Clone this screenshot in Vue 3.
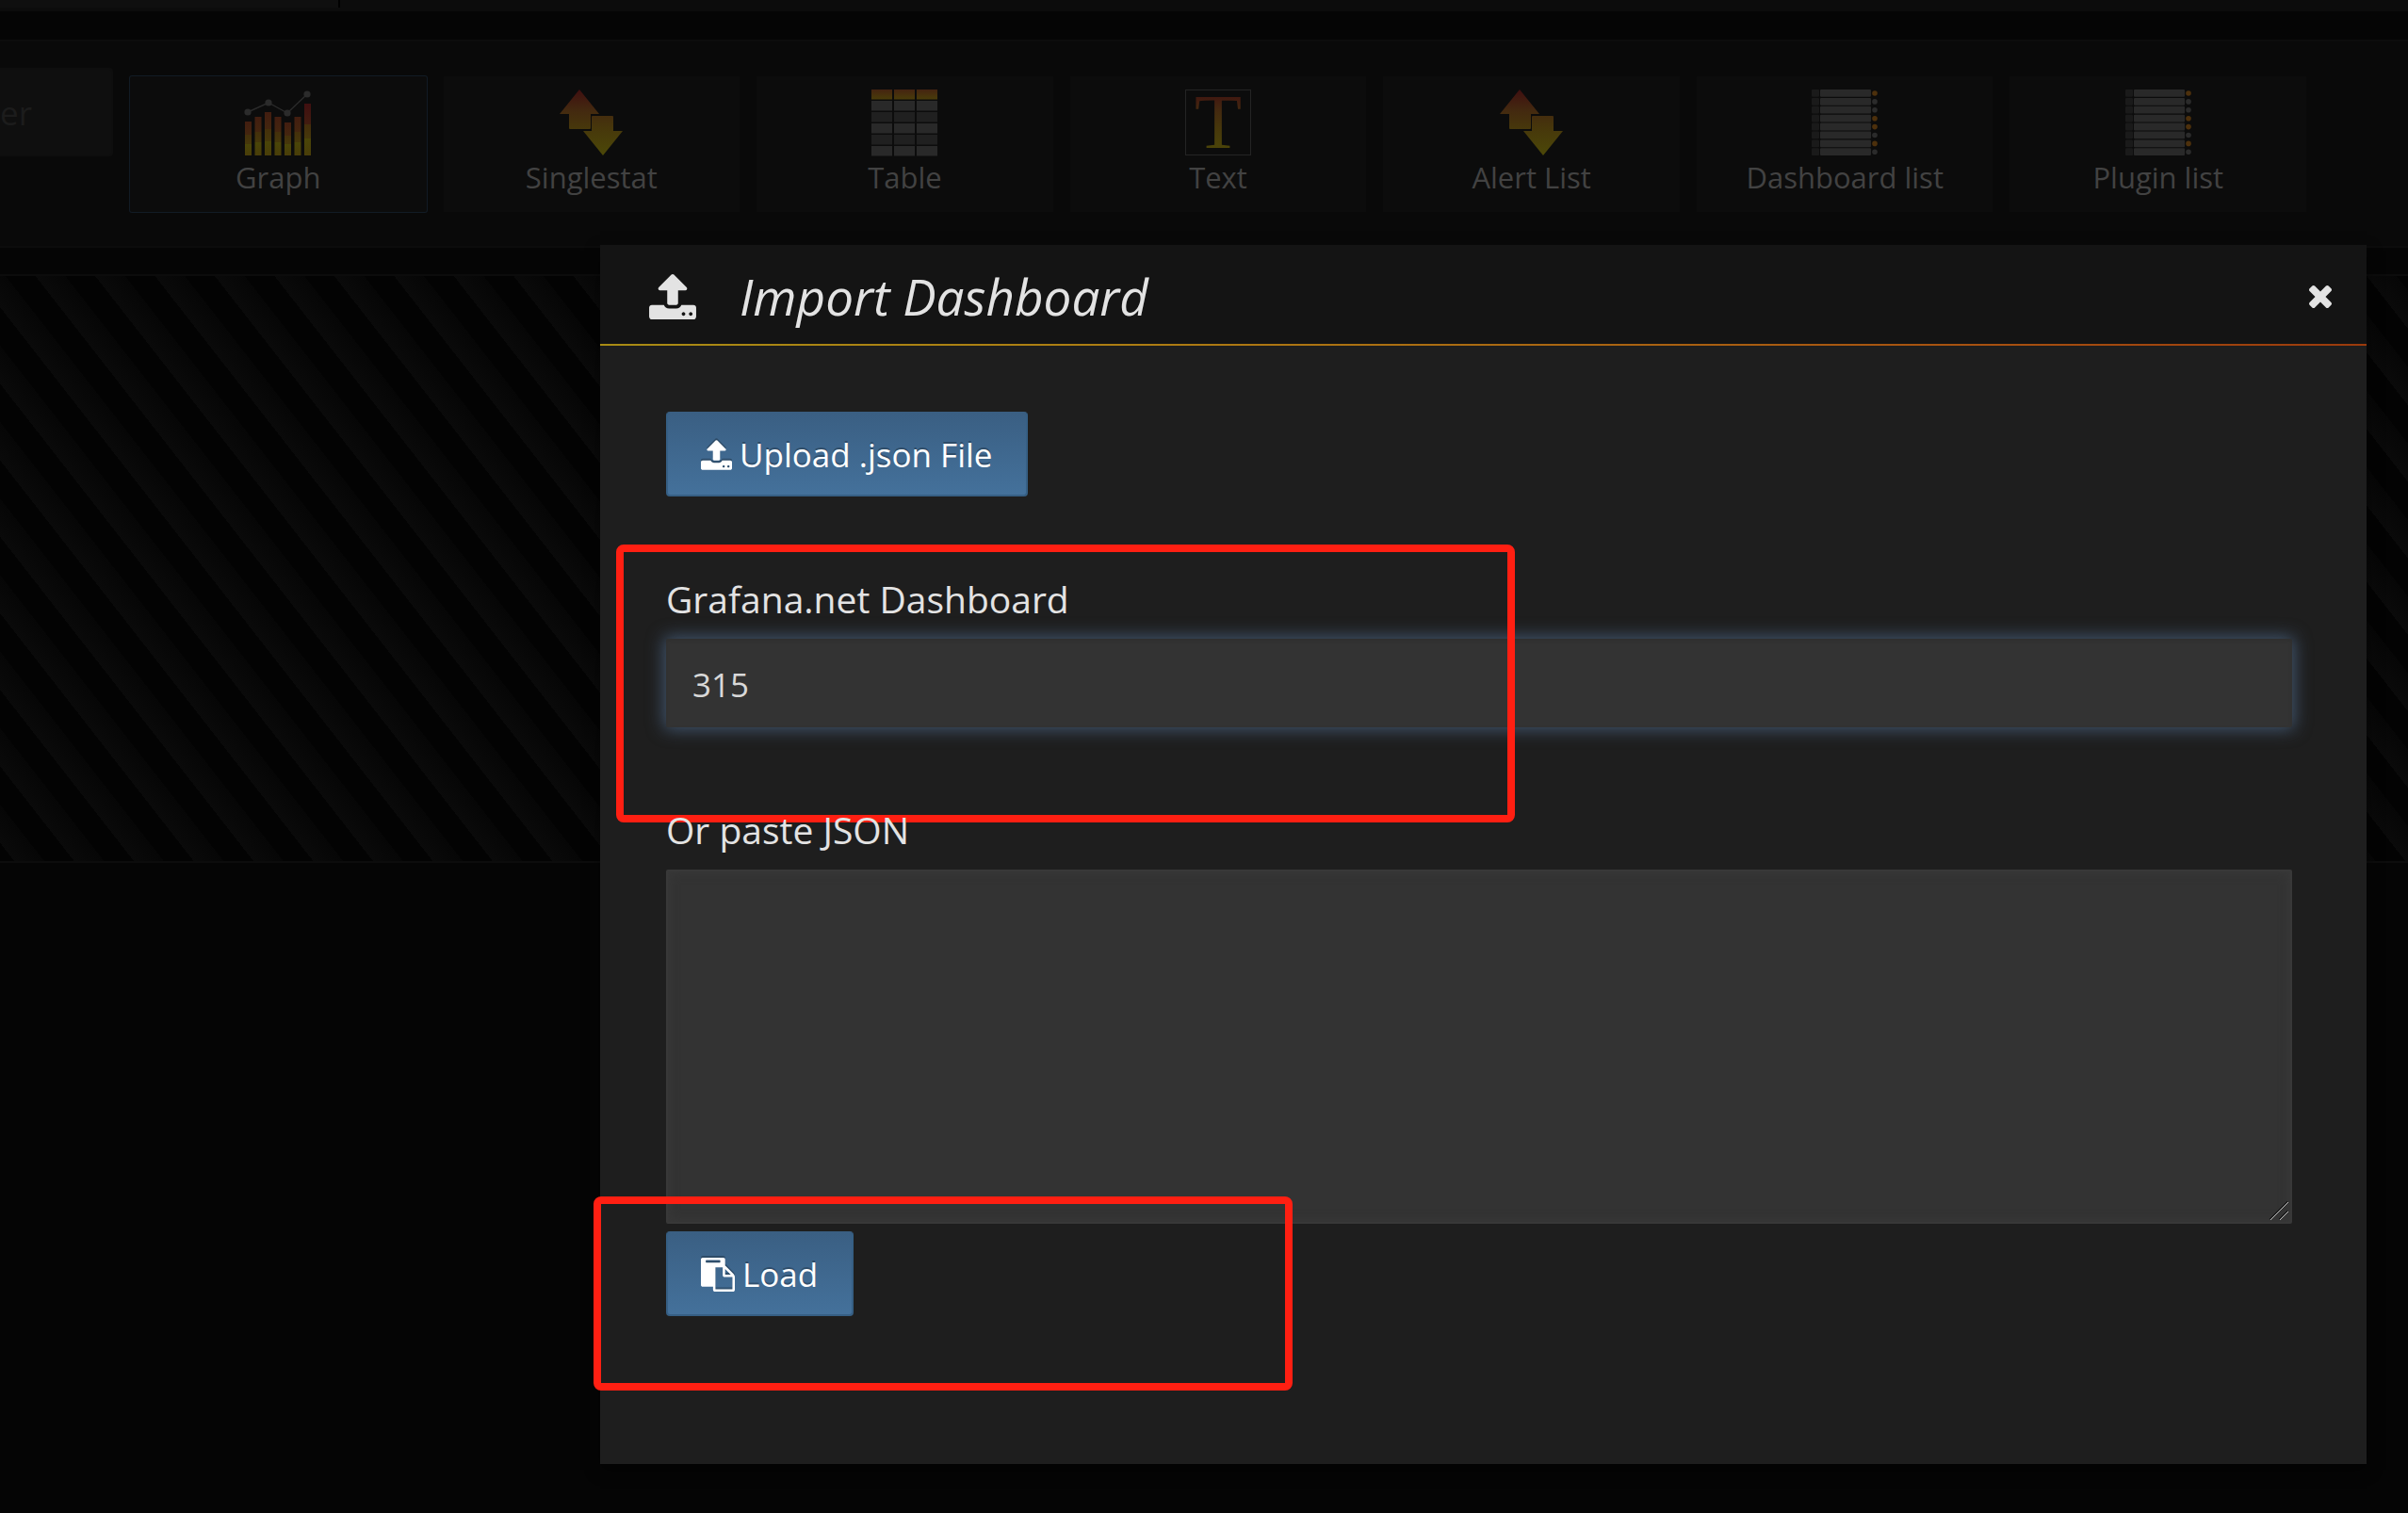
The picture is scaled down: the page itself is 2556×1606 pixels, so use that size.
<script setup>
import { ref } from 'vue'

const panels = [
  { name: 'Graph', icon: 'graph', selected: true },
  { name: 'Singlestat', icon: 'arrows' },
  { name: 'Table', icon: 'table' },
  { name: 'Text', icon: 'text' },
  { name: 'Alert List', icon: 'arrows' },
  { name: 'Dashboard list', icon: 'list' },
  { name: 'Plugin list', icon: 'list' },
]

const barTops = [34, 29, 24, 29, 35, 29, 15]
const points = [[3, 24], [25, 14], [45, 25], [66, 5]]
const listRows = [true, false, false, true, true, false, true, false]

const filter = ref('')
const dashboardId = ref('315')
const json = ref('')
</script>

<template>
  <div class="page">
    <svg class="defs" aria-hidden="true">
      <defs>
        <linearGradient id="bar" x1="0" y1="0" x2="0" y2="1">
          <stop offset="0" stop-color="#421d10" />
          <stop offset="0.4" stop-color="#44260f" />
          <stop offset="0.4" stop-color="#44300b" />
          <stop offset="0.67" stop-color="#46380b" />
          <stop offset="0.67" stop-color="#4a4508" />
          <stop offset="1" stop-color="#493d09" />
        </linearGradient>
        <linearGradient id="bar-high" x1="0" y1="0" x2="0" y2="1">
          <stop offset="0" stop-color="#400f10" />
          <stop offset="0.4" stop-color="#421d10" />
          <stop offset="0.4" stop-color="#442d0b" />
          <stop offset="0.67" stop-color="#46380b" />
          <stop offset="0.67" stop-color="#4a4508" />
          <stop offset="1" stop-color="#493d09" />
        </linearGradient>
        <linearGradient id="heat" gradientUnits="userSpaceOnUse" x1="0" y1="0" x2="0" y2="70">
          <stop offset="0" stop-color="#400f10" />
          <stop offset="0.3" stop-color="#432810" />
          <stop offset="0.6" stop-color="#47380b" />
          <stop offset="1" stop-color="#4c4808" />
        </linearGradient>
        <linearGradient id="head" x1="0" y1="0" x2="0" y2="1">
          <stop offset="0" stop-color="#452411" />
          <stop offset="1" stop-color="#493c0a" />
        </linearGradient>
      </defs>
    </svg>

    <div class="topbar"><div class="topbar-active"></div></div>

    <section class="picker" aria-label="Panel types">
      <input v-model="filter" class="filter" type="text" placeholder="er" aria-label="Panel filter" />
      <div class="cards">
        <button
          v-for="panel in panels"
          :key="panel.name"
          type="button"
          class="card"
          :class="{ selected: panel.selected }"
        >
          <svg class="card-icon" viewBox="0 0 70 70" aria-hidden="true">
            <template v-if="panel.icon === 'graph'">
              <rect
                v-for="(top, i) in barTops"
                :key="i"
                :x="i * 10.5"
                :y="top"
                width="7"
                :height="70 - top"
                :fill="top < 20 ? 'url(#bar-high)' : 'url(#bar)'"
              />
              <polyline :points="points.join(' ')" fill="none" stroke="#2b2b2b" stroke-width="1.4" />
              <circle v-for="p in points" :key="p[0]" :cx="p[0]" :cy="p[1]" r="3.6" fill="#2b2b2b" />
            </template>
            <g v-else-if="panel.icon === 'arrows'" fill="url(#heat)">
              <path d="M22 0L43 26H34V41Q34 42 33 42H12Q11 42 11 41V26H1Z" />
              <path d="M36 28H57Q58 28 58 29V44H68L47 70L26 44H35V29Q35 28 36 28Z" />
            </g>
            <template v-else-if="panel.icon === 'table'">
              <template v-for="r in 6" :key="r">
                <rect
                  v-for="c in 3"
                  :key="c"
                  :x="(c - 1) * 24"
                  :y="(r - 1) * 12"
                  width="22"
                  height="10.5"
                  :fill="r === 1 ? 'url(#head)' : r % 2 ? '#202020' : '#292929'"
                />
              </template>
            </template>
            <template v-else-if="panel.icon === 'text'">
              <rect x="0.5" y="0.5" width="69" height="69" fill="none" stroke="#242424" />
              <text x="35" y="62" class="glyph" text-anchor="middle" fill="url(#heat)">T</text>
            </template>
            <template v-else>
              <template v-for="(hot, i) in listRows" :key="i">
                <rect x="0" :y="i * 8.9" width="8" height="7.8" rx="1" fill="#1a1a1a" />
                <rect x="9" :y="i * 8.9" width="54" height="7.8" rx="1" fill="#292929" />
                <circle cx="67" :cy="i * 8.9 + 4" r="2.8" :fill="hot ? '#4d300c' : '#2b2b2b'" />
              </template>
            </template>
          </svg>
          <span>{{ panel.name }}</span>
        </button>
      </div>
    </section>

    <div class="drop-zone"></div>

    <div class="modal-layer">
      <section class="modal" role="dialog" aria-labelledby="modal-title">
        <header class="modal-header">
          <svg class="title-icon" viewBox="64 64 1664 1600" aria-hidden="true">
            <path d="M1344 1472q0-26-19-45t-45-19-45 19-19 45 19 45 45 19 45-19 19-45zm256 0q0-26-19-45t-45-19-45 19-19 45 19 45 45 19 45-19 19-45zm128-224v320q0 40-28 68t-68 28h-1472q-40 0-68-28t-28-68v-320q0-40 28-68t68-28h427q21 56 70.5 92t110.5 36h256q61 0 110.5-36t70.5-92h427q40 0 68 28t28 68zm-325-648q-17 40-59 40h-256v448q0 26-19 45t-45 19h-256q-26 0-45-19t-19-45v-448h-256q-42 0-59-40-17-39 14-69l448-448q18-19 45-19t45 19l448 448q31 30 14 69z" />
          </svg>
          <h2 id="modal-title">Import Dashboard</h2>
          <button type="button" class="close" aria-label="Close">
            <svg viewBox="302 366 1188 1188" aria-hidden="true">
              <path d="M1490 1322q0 40-28 68l-136 136q-28 28-68 28t-68-28l-294-294-294 294q-28 28-68 28t-68-28l-136-136q-28-28-28-68t28-68l294-294-294-294q-28-28-28-68t28-68l136-136q28-28 68-28t68 28l294 294 294-294q28-28 68-28t68 28l136 136q28 28 28 68t-28 68l-294 294 294 294q28 28 28 68z" />
            </svg>
          </button>
        </header>

        <form class="modal-body" @submit.prevent>
          <button type="button" class="btn">
            <svg class="icon-upload" viewBox="64 64 1664 1600" aria-hidden="true">
              <path d="M1344 1472q0-26-19-45t-45-19-45 19-19 45 19 45 45 19 45-19 19-45zm256 0q0-26-19-45t-45-19-45 19-19 45 19 45 45 19 45-19 19-45zm128-224v320q0 40-28 68t-68 28h-1472q-40 0-68-28t-28-68v-320q0-40 28-68t68-28h427q21 56 70.5 92t110.5 36h256q61 0 110.5-36t70.5-92h427q40 0 68 28t28 68zm-325-648q-17 40-59 40h-256v448q0 26-19 45t-45 19h-256q-26 0-45-19t-19-45v-448h-256q-42 0-59-40-17-39 14-69l448-448q18-19 45-19t45 19l448 448q31 30 14 69z" />
            </svg>
            <span>Upload .json File</span>
          </button>

          <div class="field">
            <label for="dashboard-id">Grafana.net Dashboard</label>
            <input id="dashboard-id" v-model="dashboardId" class="control" type="text" />
            <div class="marker marker-id"></div>
          </div>

          <div class="field">
            <label for="json">Or paste JSON</label>
            <textarea id="json" v-model="json" class="control area"></textarea>
            <svg class="grip" viewBox="0 0 20 20" aria-hidden="true">
              <path d="M0 19L19 0M10 19L19 10" stroke="#111" />
              <path d="M1 20L20 1M11 20L20 11" stroke="#b5b5b5" />
            </svg>
          </div>

          <div class="actions">
            <button type="submit" class="btn">
              <svg class="icon-paste" viewBox="0 0 1792 1792" aria-hidden="true">
                <path d="M768 1664h896v-640h-416q-40 0-68-28t-28-68v-416h-384v1152zm256-1440v-64q0-13-9.5-22.5t-22.5-9.5h-704q-13 0-22.5 9.5t-9.5 22.5v64q0 13 9.5 22.5t22.5 9.5h704q13 0 22.5-9.5t9.5-22.5zm256 672h299l-299-299v299zm512 128v672q0 40-28 68t-68 28h-960q-40 0-68-28t-28-68v-160h-544q-40 0-68-28t-28-68v-1344q0-40 28-68t68-28h1088q40 0 68 28t28 68v328q21 13 36 28l408 408q28 28 48 76t20 88z" />
              </svg>
              <span>Load</span>
            </button>
            <div class="marker marker-load"></div>
          </div>
        </form>
      </section>
    </div>
  </div>
</template>

<style>
body {
  background: #050505;
}
</style>

<style scoped>
.page,
.page * {
  box-sizing: border-box;
}

.page {
  position: relative;
  min-height: 100vh;
  overflow: hidden;
  background: #050505;
  color: #e3e3e3;
  font-family: "Open Sans", "Noto Sans", sans-serif;
}

button,
input,
textarea {
  font-family: inherit;
}

.defs {
  position: absolute;
  width: 0;
  height: 0;
}

.topbar {
  height: 12px;
  margin-bottom: 30px;
  background: #0c0c0c;
}

.topbar-active {
  width: 361px;
  height: 8px;
  border-right: 2px solid #000;
  background: #0f0f0f;
}

.picker {
  display: flex;
  align-items: flex-start;
  gap: 18px;
  padding: 28px 108px 36px 0;
  border-top: 2px solid #0c0c0c;
  border-bottom: 2px solid #0c0c0c;
  background: #090909;
}

.filter {
  width: 120px;
  height: 94px;
  padding: 0;
  border: 2px solid #0e0e0e;
  border-left: 0;
  border-radius: 0 4px 4px 0;
  background: #0f0f0f;
  color: #404040;
  font-size: 35px;
}

.filter::placeholder {
  color: #1c1c1c;
  opacity: 1;
}

.cards {
  display: flex;
  flex: 1;
  gap: 18px;
  padding-top: 9px;
}

.card {
  display: flex;
  flex: 1 1 0;
  flex-direction: column;
  align-items: center;
  padding: 14px 0;
  border: 0;
  background: #0c0c0c;
  color: #424242;
  font-size: 31px;
  line-height: 46px;
  white-space: nowrap;
}

.card.selected {
  border-radius: 2px;
  box-shadow: 0 0 0 1px #121b25;
}

.card-icon {
  width: 70px;
  height: 70px;
  overflow: visible;
}

.glyph {
  font-family: "Liberation Serif", serif;
  font-size: 82px;
}

.drop-zone {
  height: 625px;
  margin-top: 28px;
  border-top: 2px solid #0c0c0c;
  border-bottom: 2px solid #0c0c0c;
  background: repeating-linear-gradient(
    52deg,
    #030303 0,
    #030303 12px,
    #0a0a0a 12px,
    #060606 37px,
    #030303 37px,
    #030303 50px
  );
}

.modal-layer {
  position: absolute;
  inset: 0;
  padding: 260px 44px 52px 637px;
}

.modal {
  background: #1e1e1e;
  box-shadow: 0 6px 14px rgba(0, 0, 0, 0.5);
}

.modal-header {
  display: flex;
  align-items: center;
  height: 107px;
  padding: 4px 37px 0 52px;
  border-bottom: 2px solid;
  border-image: linear-gradient(to right, #a88b14, #ad7d12 30%, #a64f10 80%, #9a3a0c) 1;
  background: #141414;
}

.title-icon {
  width: 50px;
  height: 48px;
  fill: #e3e3e3;
}

.modal-header h2 {
  flex: 1;
  margin: 0 0 0 46px;
  font-size: 53px;
  font-style: italic;
  font-weight: 400;
  line-height: 72px;
}

.close {
  display: flex;
  padding: 0;
  border: 0;
  background: none;
}

.close svg {
  width: 24px;
  height: 24px;
  fill: #e3e3e3;
}

.modal-body {
  padding: 70px 79px 157px 70px;
}

.btn {
  display: flex;
  align-items: center;
  gap: 8px;
  height: 90px;
  padding: 2px 36px 0 35px;
  border: 2px solid #365f84;
  border-top-color: #3a5f82;
  border-radius: 4px;
  background: linear-gradient(#3a5f83, #44719b);
  color: #fff;
  font-size: 35px;
  line-height: 50px;
  text-shadow: 0 -2px 0 rgba(0, 0, 0, 0.25);
  white-space: nowrap;
}

.btn svg {
  fill: #fff;
  filter: drop-shadow(0 -2px 0 rgba(0, 0, 0, 0.25));
}

.icon-upload {
  width: 33px;
  height: 32px;
}

.icon-paste {
  width: 36px;
  height: 36px;
}

.field {
  position: relative;
  margin-top: 81px;
}

.field label {
  display: block;
  margin-bottom: 14px;
  font-size: 39px;
  line-height: 56px;
}

.control {
  display: block;
  width: 100%;
  height: 94px;
  padding: 2px 28px 0;
  border: 0;
  border-radius: 2px;
  outline: 0;
  background: #333;
  box-shadow: inset 0 2px 4px rgba(0, 0, 0, 0.1), 0 0 18px 2px #435872;
  color: #d8d8d8;
  font-size: 35px;
}

.area {
  height: 376px;
  border: 2px solid #383838;
  box-shadow: inset 0 0 12px #3a3a3a;
  resize: none;
}

.grip {
  position: absolute;
  right: 4px;
  bottom: 4px;
  width: 20px;
  height: 20px;
  pointer-events: none;
}

.actions {
  position: relative;
  margin-top: 8px;
}

/* Red outlines that point out the fields to fill in */
.marker {
  position: absolute;
  border: 8px solid #ff1f12;
  border-radius: 8px;
  pointer-events: none;
}

.marker-id {
  top: -30px;
  left: -53px;
  width: 954px;
  height: 295px;
}

.marker-load {
  top: -37px;
  left: -77px;
  width: 742px;
  height: 206px;
}
</style>
